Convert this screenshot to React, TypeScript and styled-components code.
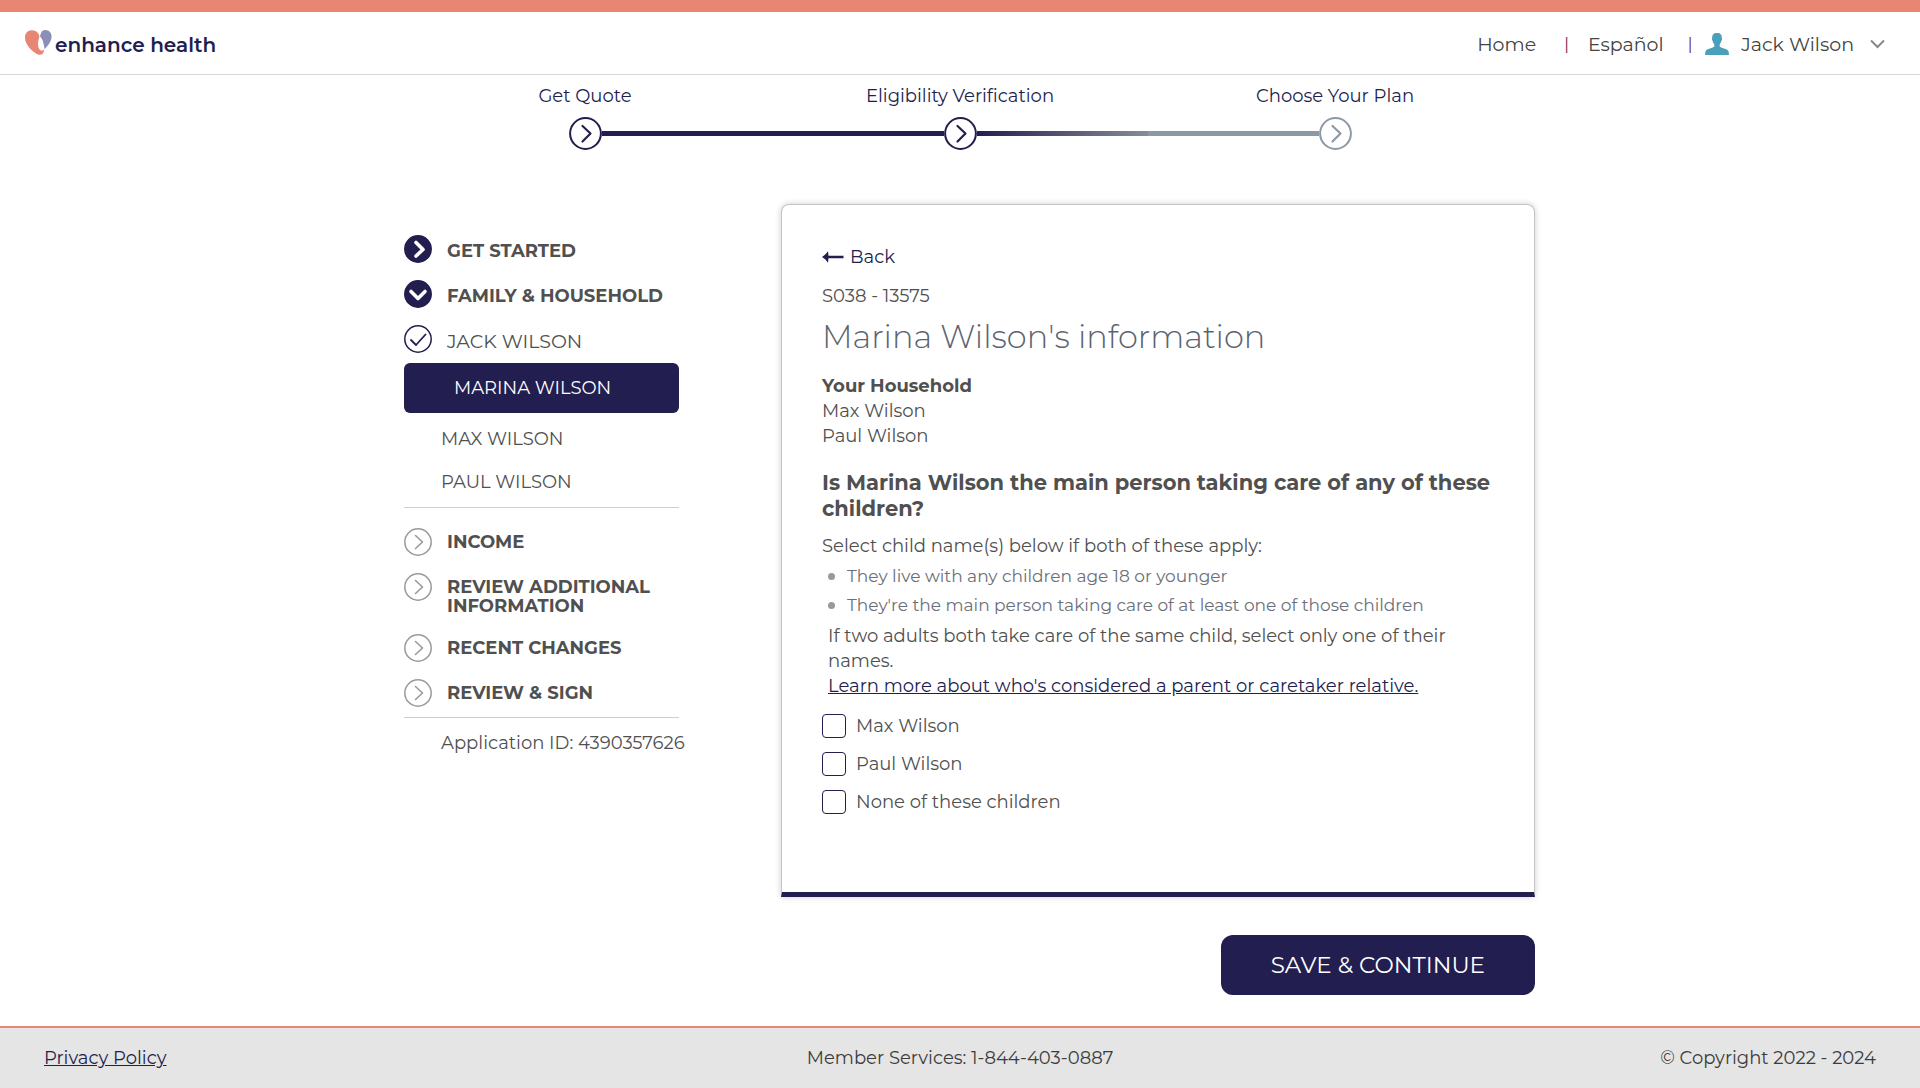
import React from "react";
import styled, { createGlobalStyle, css } from "styled-components";

const navy = "#221e4f";
const coral = "#e68673";
const slate = "#8d98a5";
const ink = "#505050";

const GlobalStyle = createGlobalStyle`
  *, *::before, *::after { box-sizing: border-box; }
  body {
    margin: 0;
    background: #fff;
    color: ${ink};
    font-family: Montserrat, Inter, "Open Sans", sans-serif;
    font-size: 18px;
    font-weight: 400;
    line-height: 25px;
  }
  h1, h2, h3, p, ul, ol { margin: 0; padding: 0; }
  ul, ol { list-style: none; }
  button, input { font: inherit; }
`;

const Page = styled.div`
  display: flex;
  flex-direction: column;
  min-height: 100vh;
`;

const Header = styled.header`
  display: flex;
  align-items: center;
  justify-content: space-between;
  padding: 18px 35px 16px 25px;
  border-top: 12px solid ${coral};
  border-bottom: 1px solid #d6d6d6;
`;

const Brand = styled.a`
  display: flex;
  align-items: flex-start;
  gap: 3px;
  color: ${navy};
  font-size: 20px;
  font-weight: 600;
  text-decoration: none;
`;

const BrandName = styled.span`
  padding-top: 3px;
`;

const Nav = styled.nav`
  display: flex;
  align-items: center;
  color: #444;
  font-size: 19px;
`;

const NavLink = styled.a`
  color: inherit;
  text-decoration: none;
`;

const Divider = styled.span<{ $tight?: boolean }>`
  margin: ${(p) => (p.$tight ? "0 13px 0 24px" : "0 19px 0 28px")};
  color: #6b2350;
  font-size: 16px;
`;

const UserButton = styled.button`
  display: flex;
  align-items: center;
  gap: 12px;
  padding: 0;
  border: 0;
  background: none;
  color: inherit;
  cursor: pointer;
`;

const Main = styled.main`
  flex: 1;
  padding: 9px 0 31px;
`;

const Steps = styled.ol`
  display: grid;
  grid-template-columns: repeat(3, 1fr);
  max-width: 1125px;
  margin: 0 auto 54px;
  color: ${navy};
`;

const Step = styled.li`
  display: flex;
  flex-direction: column;
  gap: 8px;
  text-align: center;
`;

const Track = styled.div`
  display: grid;
  grid-template-columns: 1fr 33px 1fr;
  align-items: center;
`;

const Line = styled.span<{ $fill: string }>`
  height: 5px;
  background: ${(p) => p.$fill};
`;

const Content = styled.div`
  display: grid;
  grid-template-columns: 275px 1fr;
  column-gap: 102px;
  align-items: start;
  max-width: 1170px;
  margin: 0 auto;
  padding: 0 10px 0 29px;
`;

const Sidebar = styled.nav`
  padding-top: 31px;
  line-height: 19px;
`;

const SectionLink = styled.a`
  padding-top: 7px;
  color: inherit;
  text-decoration: none;
`;

const Sections = styled.ul<{ $closed?: boolean }>`
  display: flex;
  flex-direction: column;
  gap: 17px;
  padding-bottom: 10px;
  ${(p) => p.$closed && css`
    border-bottom: 1px solid #cfcfcf;

    ${SectionLink} { padding: 5px 0 1px; }
  `}
`;

const Section = styled.li<{ $plain?: boolean }>`
  display: flex;
  align-items: flex-start;
  gap: 15px;
  font-size: ${(p) => (p.$plain ? "19px" : "18px")};
  font-weight: ${(p) => (p.$plain ? 400 : 700)};

  svg { flex: none; }
`;

const Members = styled.ul`
  margin-bottom: 20px;
  padding-bottom: 3px;
  border-bottom: 1px solid #cfcfcf;
`;

const Member = styled.li<{ $active?: boolean }>`
  padding-left: ${(p) => (p.$active ? "50px" : "37px")};
  margin-bottom: ${(p) => (p.$active ? "5px" : "0")};
  border-radius: 6px;
  background: ${(p) => (p.$active ? navy : "none")};
  color: ${(p) => (p.$active ? "#fff" : ink)};
  line-height: ${(p) => (p.$active ? "50px" : "43px")};

  a { color: inherit; text-decoration: none; }
`;

const ApplicationId = styled.p`
  padding: 13px 0 0 37px;
  line-height: 25px;
  white-space: nowrap;
`;

const Card = styled.section`
  padding: 40px 40px 78px;
  border: 1px solid #c4c4c4;
  border-bottom: 5px solid ${navy};
  border-radius: 8px 8px 0 0;
  box-shadow: 0 0 6px rgba(0, 0, 0, 0.2);
`;

const BackLink = styled.a`
  display: inline-flex;
  align-items: center;
  gap: 6px;
  margin-bottom: 14px;
  color: ${navy};
  text-decoration: none;
  vertical-align: top;
`;

const Title = styled.h1`
  margin: 8px 0 17px;
  color: #5b6370;
  font-size: 32px;
  font-weight: 300;
  line-height: 40px;
`;

const Household = styled.h3`
  font-size: 18px;
  font-weight: 700;
  line-height: 25px;
`;

const Question = styled.h2`
  margin: 21px 0 12px;
  font-size: 21px;
  font-weight: 700;
  line-height: 26px;
`;

const Conditions = styled.ul`
  margin: 3px 0 4px 6px;
  color: #6b6f7a;
  font-size: 17px;
  line-height: 29px;
`;

const Condition = styled.li`
  display: flex;
  align-items: center;
  gap: 12px;

  &::before {
    content: "";
    width: 7px;
    height: 7px;
    border-radius: 50%;
    background: #999;
  }
`;

const Note = styled.div`
  margin: 0 0 15px 6px;
`;

const TextLink = styled.a`
  color: ${navy};
  text-decoration: underline;
`;

const Options = styled.fieldset`
  display: flex;
  flex-direction: column;
  align-items: flex-start;
  gap: 14px;
  margin: 0;
  padding: 0;
  border: 0;
`;

const Option = styled.label`
  display: flex;
  align-items: center;
  gap: 10px;
  line-height: 24px;
`;

const Checkbox = styled.input`
  appearance: none;
  width: 24px;
  height: 24px;
  margin: 0;
  border: 1px solid ${navy};
  border-radius: 4px;
  background: #fff;

  &:checked { background: ${navy}; }
`;

const Actions = styled.div`
  display: flex;
  justify-content: flex-end;
  margin-top: 38px;
`;

const SaveButton = styled.button`
  padding: 0 50px;
  border: 0;
  border-radius: 12px;
  background: ${navy};
  color: #fff;
  font-size: 23px;
  line-height: 60px;
  cursor: pointer;
`;

const Footer = styled.footer`
  display: grid;
  grid-template-columns: 1fr auto 1fr;
  padding: 18px 44px 17px;
  border-top: 2px solid ${coral};
  background: #e5e5e5;
  color: #3c3c3c;
`;

const Copyright = styled.span`
  text-align: right;
`;

const Heart = () => (
  <svg width="27" height="26" viewBox="0 0 27 26" aria-hidden="true">
    <path fill={coral} d="M7 .3C3 .1 0 3 0 7.400C0 14.500 7 21.600 13 24.500C16.500 25.800 19 23.600 19 19.500C17.500 21 15.800 21 14.600 19.600C12.400 16.500 12.800 11.500 14.500 6.600C13.500 2.500 11 .5 7 .3Z" />
    <path fill="#8a90b5" d="M19.800 0C23.800-.1 26.600 2.600 26.600 6.600C26.600 11.500 22.800 16 19.500 19.200C18.900 14.500 18.300 9.800 15 6.600C15.600 2.600 17.300.2 19.800 0Z" />
  </svg>
);

const Person = () => (
  <svg width="24" height="22" viewBox="0 0 24 22" aria-hidden="true">
    <path fill="#4a9fba" d="M12 0C8.500 0 7 2 7.200 5C6.600 5.400 6.900 7.300 7.700 7.900C8 9.500 8.700 10.500 9.300 11.200V13.400C8.500 15.200 1.500 15 .4 18.500L0 22H24L23.600 18.500C22.500 15 15.500 15.200 14.700 13.400V11.200C15.300 10.500 16 9.500 16.300 7.900C17.100 7.300 17.400 5.400 16.800 5C17 2 15.500 0 12 0Z" />
  </svg>
);

const Caret = () => (
  <svg width="19" height="10" viewBox="0 0 19 10" fill="none" stroke="#888" strokeWidth="2" aria-hidden="true">
    <path d="M5 1.500L11.500 8L18 1.500" />
  </svg>
);

const StepNode = ({ color }: { color: string }) => (
  <svg width="33" height="33" viewBox="0 0 33 33" fill="none" stroke={color} strokeWidth="2" aria-hidden="true">
    <circle cx="16.500" cy="16.500" r="15.400" />
    <path d="M13.500 9L21.500 16.500L13.500 24.500" strokeWidth="2.200" strokeLinecap="round" strokeLinejoin="round" />
  </svg>
);

type Mark = "done" | "open" | "check" | "todo";

const marks: Record<Mark, { d: string; fill: string; ring: string; stroke: string; width: number }> = {
  done: { d: "M12 7.500L19 14.500L12 21", fill: navy, ring: navy, stroke: "#fff", width: 3.6 },
  open: { d: "M7 11.500L14 18.500L21 11.500", fill: navy, ring: navy, stroke: "#fff", width: 3.6 },
  check: { d: "M7 15L12 20L21.500 9.500", fill: "none", ring: navy, stroke: navy, width: 1.8 },
  todo: { d: "M11.500 7.500L18.500 14L11.500 20.500", fill: "none", ring: "#999", stroke: "#999", width: 1.6 },
};

const StatusIcon = ({ mark }: { mark: Mark }) => {
  const m = marks[mark];
  return (
    <svg width="28" height="28" viewBox="0 0 28 28" fill="none" aria-hidden="true">
      <circle cx="14" cy="14" r="13.200" fill={m.fill} stroke={m.ring} strokeWidth="1.500" />
      <path d={m.d} stroke={m.stroke} strokeWidth={m.width} strokeLinecap="round" strokeLinejoin="round" />
    </svg>
  );
};

const BackArrow = () => (
  <svg width="22" height="14" viewBox="0 0 22 14" fill={navy} aria-hidden="true">
    <path d="M0 6C2.500 4.500 4.500 2.500 6 .2L6.500 4.700H21.500V7.300H6.500L6 11.800C4.500 9.500 2.500 7.500 0 6Z" />
  </svg>
);

const steps = [
  { label: "Get Quote", color: navy, before: "none", after: navy },
  {
    label: "Eligibility Verification",
    color: navy,
    before: navy,
    after: `linear-gradient(90deg, ${navy}, #868c96)`,
  },
  { label: "Choose Your Plan", color: slate, before: slate, after: "none" },
];

const started: { label: string; mark: Mark; plain?: boolean }[] = [
  { label: "GET STARTED", mark: "done" },
  { label: "FAMILY & HOUSEHOLD", mark: "open" },
  { label: "JACK WILSON", mark: "check", plain: true },
];

const upcoming = ["INCOME", "REVIEW ADDITIONAL INFORMATION", "RECENT CHANGES", "REVIEW & SIGN"];

const options = ["Max Wilson", "Paul Wilson", "None of these children"];

export default function App() {
  return (
    <Page>
      <GlobalStyle />
      <Header>
        <Brand href="#">
          <Heart />
          <BrandName>enhance health</BrandName>
        </Brand>
        <Nav>
          <NavLink href="#">Home</NavLink>
          <Divider>|</Divider>
          <NavLink href="#">Español</NavLink>
          <Divider $tight>|</Divider>
          <UserButton type="button">
            <Person />
            Jack Wilson
            <Caret />
          </UserButton>
        </Nav>
      </Header>

      <Main>
        <Steps>
          {steps.map((s) => (
            <Step key={s.label}>
              {s.label}
              <Track>
                <Line $fill={s.before} />
                <StepNode color={s.color} />
                <Line $fill={s.after} />
              </Track>
            </Step>
          ))}
        </Steps>

        <Content>
          <Sidebar>
            <Sections>
              {started.map((s) => (
                <Section key={s.label} $plain={s.plain}>
                  <StatusIcon mark={s.mark} />
                  <SectionLink href="#">{s.label}</SectionLink>
                </Section>
              ))}
            </Sections>
            <Members>
              <Member $active><a href="#">MARINA WILSON</a></Member>
              <Member><a href="#">MAX WILSON</a></Member>
              <Member><a href="#">PAUL WILSON</a></Member>
            </Members>
            <Sections $closed>
              {upcoming.map((label) => (
                <Section key={label}>
                  <StatusIcon mark="todo" />
                  <SectionLink href="#">{label}</SectionLink>
                </Section>
              ))}
            </Sections>
            <ApplicationId>Application ID: 4390357626</ApplicationId>
          </Sidebar>

          <form onSubmit={(e) => e.preventDefault()}>
            <Card>
              <BackLink href="#">
                <BackArrow />
                Back
              </BackLink>
              <p>S038 - 13575</p>
              <Title>Marina Wilson's information</Title>
              <Household>Your Household</Household>
              <p>Max Wilson</p>
              <p>Paul Wilson</p>
              <Question id="question">
                Is Marina Wilson the main person taking care of any of these children?
              </Question>
              <p>Select child name(s) below if both of these apply:</p>
              <Conditions>
                <Condition>They live with any children age 18 or younger</Condition>
                <Condition>They're the main person taking care of at least one of those children</Condition>
              </Conditions>
              <Note>
                <p>If two adults both take care of the same child, select only one of their names.</p>
                <TextLink href="#">Learn more about who's considered a parent or caretaker relative.</TextLink>
              </Note>
              <Options aria-labelledby="question">
                {options.map((name) => (
                  <Option key={name}>
                    <Checkbox type="checkbox" name="children" value={name} />
                    {name}
                  </Option>
                ))}
              </Options>
            </Card>
            <Actions>
              <SaveButton type="submit">SAVE &amp; CONTINUE</SaveButton>
            </Actions>
          </form>
        </Content>
      </Main>

      <Footer>
        <span><TextLink href="#">Privacy Policy</TextLink></span>
        <span>Member Services: 1-844-403-0887</span>
        <Copyright>© Copyright 2022 - 2024</Copyright>
      </Footer>
    </Page>
  );
}
